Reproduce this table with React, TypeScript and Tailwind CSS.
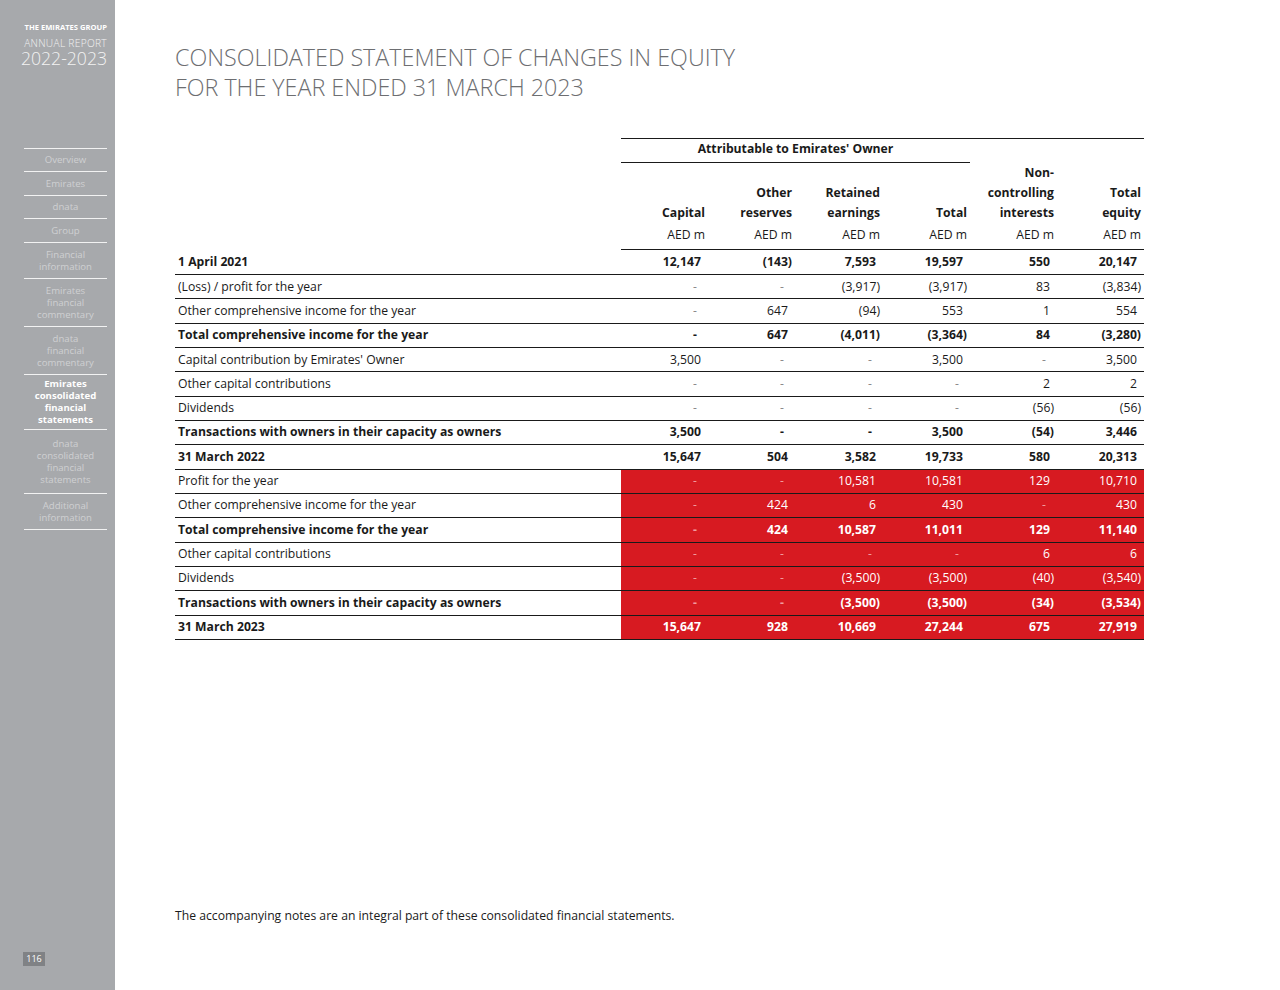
import React from "react";

type Row = { label: string; bold?: boolean; red?: boolean; vals: string[] };

const rows: Row[] = [
  { label: "1 April 2021", bold: true, vals: ["12,147", "(143)", "7,593", "19,597", "550", "20,147"] },
  { label: "(Loss) / profit for the year", vals: ["-", "-", "(3,917)", "(3,917)", "83", "(3,834)"] },
  { label: "Other comprehensive income for the year", vals: ["-", "647", "(94)", "553", "1", "554"] },
  { label: "Total comprehensive income for the year", bold: true, vals: ["-", "647", "(4,011)", "(3,364)", "84", "(3,280)"] },
  { label: "Capital contribution by Emirates' Owner", vals: ["3,500", "-", "-", "3,500", "-", "3,500"] },
  { label: "Other capital contributions", vals: ["-", "-", "-", "-", "2", "2"] },
  { label: "Dividends", vals: ["-", "-", "-", "-", "(56)", "(56)"] },
  { label: "Transactions with owners in their capacity as owners", bold: true, vals: ["3,500", "-", "-", "3,500", "(54)", "3,446"] },
  { label: "31 March 2022", bold: true, vals: ["15,647", "504", "3,582", "19,733", "580", "20,313"] },
  { label: "Profit for the year", red: true, vals: ["-", "-", "10,581", "10,581", "129", "10,710"] },
  { label: "Other comprehensive income for the year", red: true, vals: ["-", "424", "6", "430", "-", "430"] },
  { label: "Total comprehensive income for the year", red: true, bold: true, vals: ["-", "424", "10,587", "11,011", "129", "11,140"] },
  { label: "Other capital contributions", red: true, vals: ["-", "-", "-", "-", "6", "6"] },
  { label: "Dividends", red: true, vals: ["-", "-", "(3,500)", "(3,500)", "(40)", "(3,540)"] },
  { label: "Transactions with owners in their capacity as owners", red: true, bold: true, vals: ["-", "-", "(3,500)", "(3,500)", "(34)", "(3,534)"] },
  { label: "31 March 2023", red: true, bold: true, vals: ["15,647", "928", "10,669", "27,244", "675", "27,919"] },
];

const colW = ["w-[87px]", "w-[87px]", "w-[88px]", "w-[87px]", "w-[87px]", "w-[87px]"];

const nav: { t: string[]; h: string; active?: boolean }[] = [
  { t: ["Overview"], h: "h-[23px]" },
  { t: ["Emirates"], h: "h-[24px]" },
  { t: ["dnata"], h: "h-[23px]" },
  { t: ["Group"], h: "h-[24px]" },
  { t: ["Financial", "information"], h: "h-[36px]" },
  { t: ["Emirates", "financial", "commentary"], h: "h-[48px]" },
  { t: ["dnata", "financial", "commentary"], h: "h-[48px]" },
  { t: ["Emirates", "consolidated", "financial", "statements"], h: "h-[55px]", active: true },
  { t: ["dnata", "consolidated", "financial", "statements"], h: "h-[64px]" },
  { t: ["Additional", "information"], h: "h-[36px]" },
];

function Cell({ v, w, bold, red }: { v: string; w: string; bold?: boolean; red?: boolean }) {
  const isDash = v === "-";
  const paren = v.endsWith(")");
  const pr = isDash ? "pr-[11px]" : paren ? "pr-[3px]" : "pr-[7px]";
  let color = red ? "text-white" : "text-[#1a1a1a]";
  if (isDash) color = red ? "text-[#f19a9e]" : "text-[#8a8a8a]";
  if (isDash && bold && !red) color = "text-[#1a1a1a]";
  return (
    <div className={`${w} ${pr} ${color} ${bold ? "font-bold" : ""} text-right`}>{v}</div>
  );
}

export default function App() {
  return (
    <div className="flex w-[1280px] h-[990px] bg-white" style={{ fontFamily: "'Open Sans', 'Noto Sans', sans-serif" }}>
      {/* Sidebar */}
      <div className="w-[115px] h-full bg-[#a7a9ac] flex flex-col relative shrink-0">
        <div className="pt-[22px] pr-[8px] flex flex-col items-end text-white">
          <div className="text-[7.6px] font-bold leading-[10px]">THE EMIRATES GROUP</div>
          <div className="text-[10.2px] font-light leading-[10px] mt-[6px] tracking-[0.3px] text-[#f3f3f3]">ANNUAL REPORT</div>
          <div className="text-[17.6px] font-light leading-[17px] mt-[2px] text-[#f3f3f3]">2022-2023</div>
        </div>
        <div className="mt-[81px] ml-[24px] w-[83px] border-t border-[#f2f2f2]">
          {nav.map((n, i) => (
            <div
              key={i}
              className={`${n.h} border-b border-[#f2f2f2] flex flex-col items-center justify-center text-[9.6px] leading-[12px] ${
                n.active ? "text-white font-bold" : "text-[#cfd0d2]"
              }`}
            >
              {n.t.map((l, j) => (
                <div key={j}>{l}</div>
              ))}
            </div>
          ))}
        </div>
        <div className="absolute left-[23px] top-[952px] w-[22px] h-[14px] bg-[#808285] text-white text-[9px] leading-[14px] text-center">116</div>
      </div>

      {/* Main */}
      <div className="flex-1 pl-[60px] flex flex-col">
        <div className="mt-[42px] text-[23.3px] leading-[30px] font-light text-[#6d6e71]">
          <div>CONSOLIDATED STATEMENT OF CHANGES IN EQUITY</div>
          <div>FOR THE YEAR ENDED 31 MARCH 2023</div>
        </div>

        <div className="mt-[36px] w-[969px] text-[12.2px] text-[#1a1a1a]">
          {/* header */}
          <div className="flex">
            <div className="w-[446px]" />
            <div className="w-[523px] border-t border-[#1a1a1a]">
              <div className="w-[349px] h-[24px] pb-[2px] border-b border-[#1a1a1a] flex items-center justify-center font-bold">
                Attributable to Emirates' Owner
              </div>
              <div className="flex h-[87px] border-b border-[#1a1a1a]">
                {[
                  ["", "", "Capital"],
                  ["", "Other", "reserves"],
                  ["", "Retained", "earnings"],
                  ["", "", "Total"],
                  ["Non-", "controlling", "interests"],
                  ["", "Total", "equity"],
                ].map((h, i) => (
                  <div key={i} className={`${colW[i]} pr-[3px] text-right flex flex-col`}>
                    <div className="h-[60px] flex flex-col justify-end font-bold leading-[20px]">
                      {h.filter((x) => x).map((x, j) => (
                        <div key={j}>{x}</div>
                      ))}
                    </div>
                    <div className="mt-[2px] leading-[20px]">AED m</div>
                  </div>
                ))}
              </div>
            </div>
          </div>
          {/* rows */}
          {rows.map((r, i) => (
            <div key={i} className={`flex items-center border-b border-[#1a1a1a] ${i === 0 ? "h-[25px] pt-[1px]" : "h-[24.33px]"}`}>
              <div className={`w-[446px] pl-[3px] ${r.bold ? "font-bold" : ""}`}>{r.label}</div>
              <div className={`flex h-full items-center ${r.red ? "bg-[#d71a21]" : ""}`}>
                {r.vals.map((v, j) => (
                  <Cell key={j} v={v} w={colW[j]} bold={r.bold} red={r.red} />
                ))}
              </div>
            </div>
          ))}
        </div>

        <div className="mt-auto mb-[65px] text-[12.2px] text-[#1a1a1a]">
          The accompanying notes are an integral part of these consolidated financial statements.
        </div>
      </div>
    </div>
  );
}
